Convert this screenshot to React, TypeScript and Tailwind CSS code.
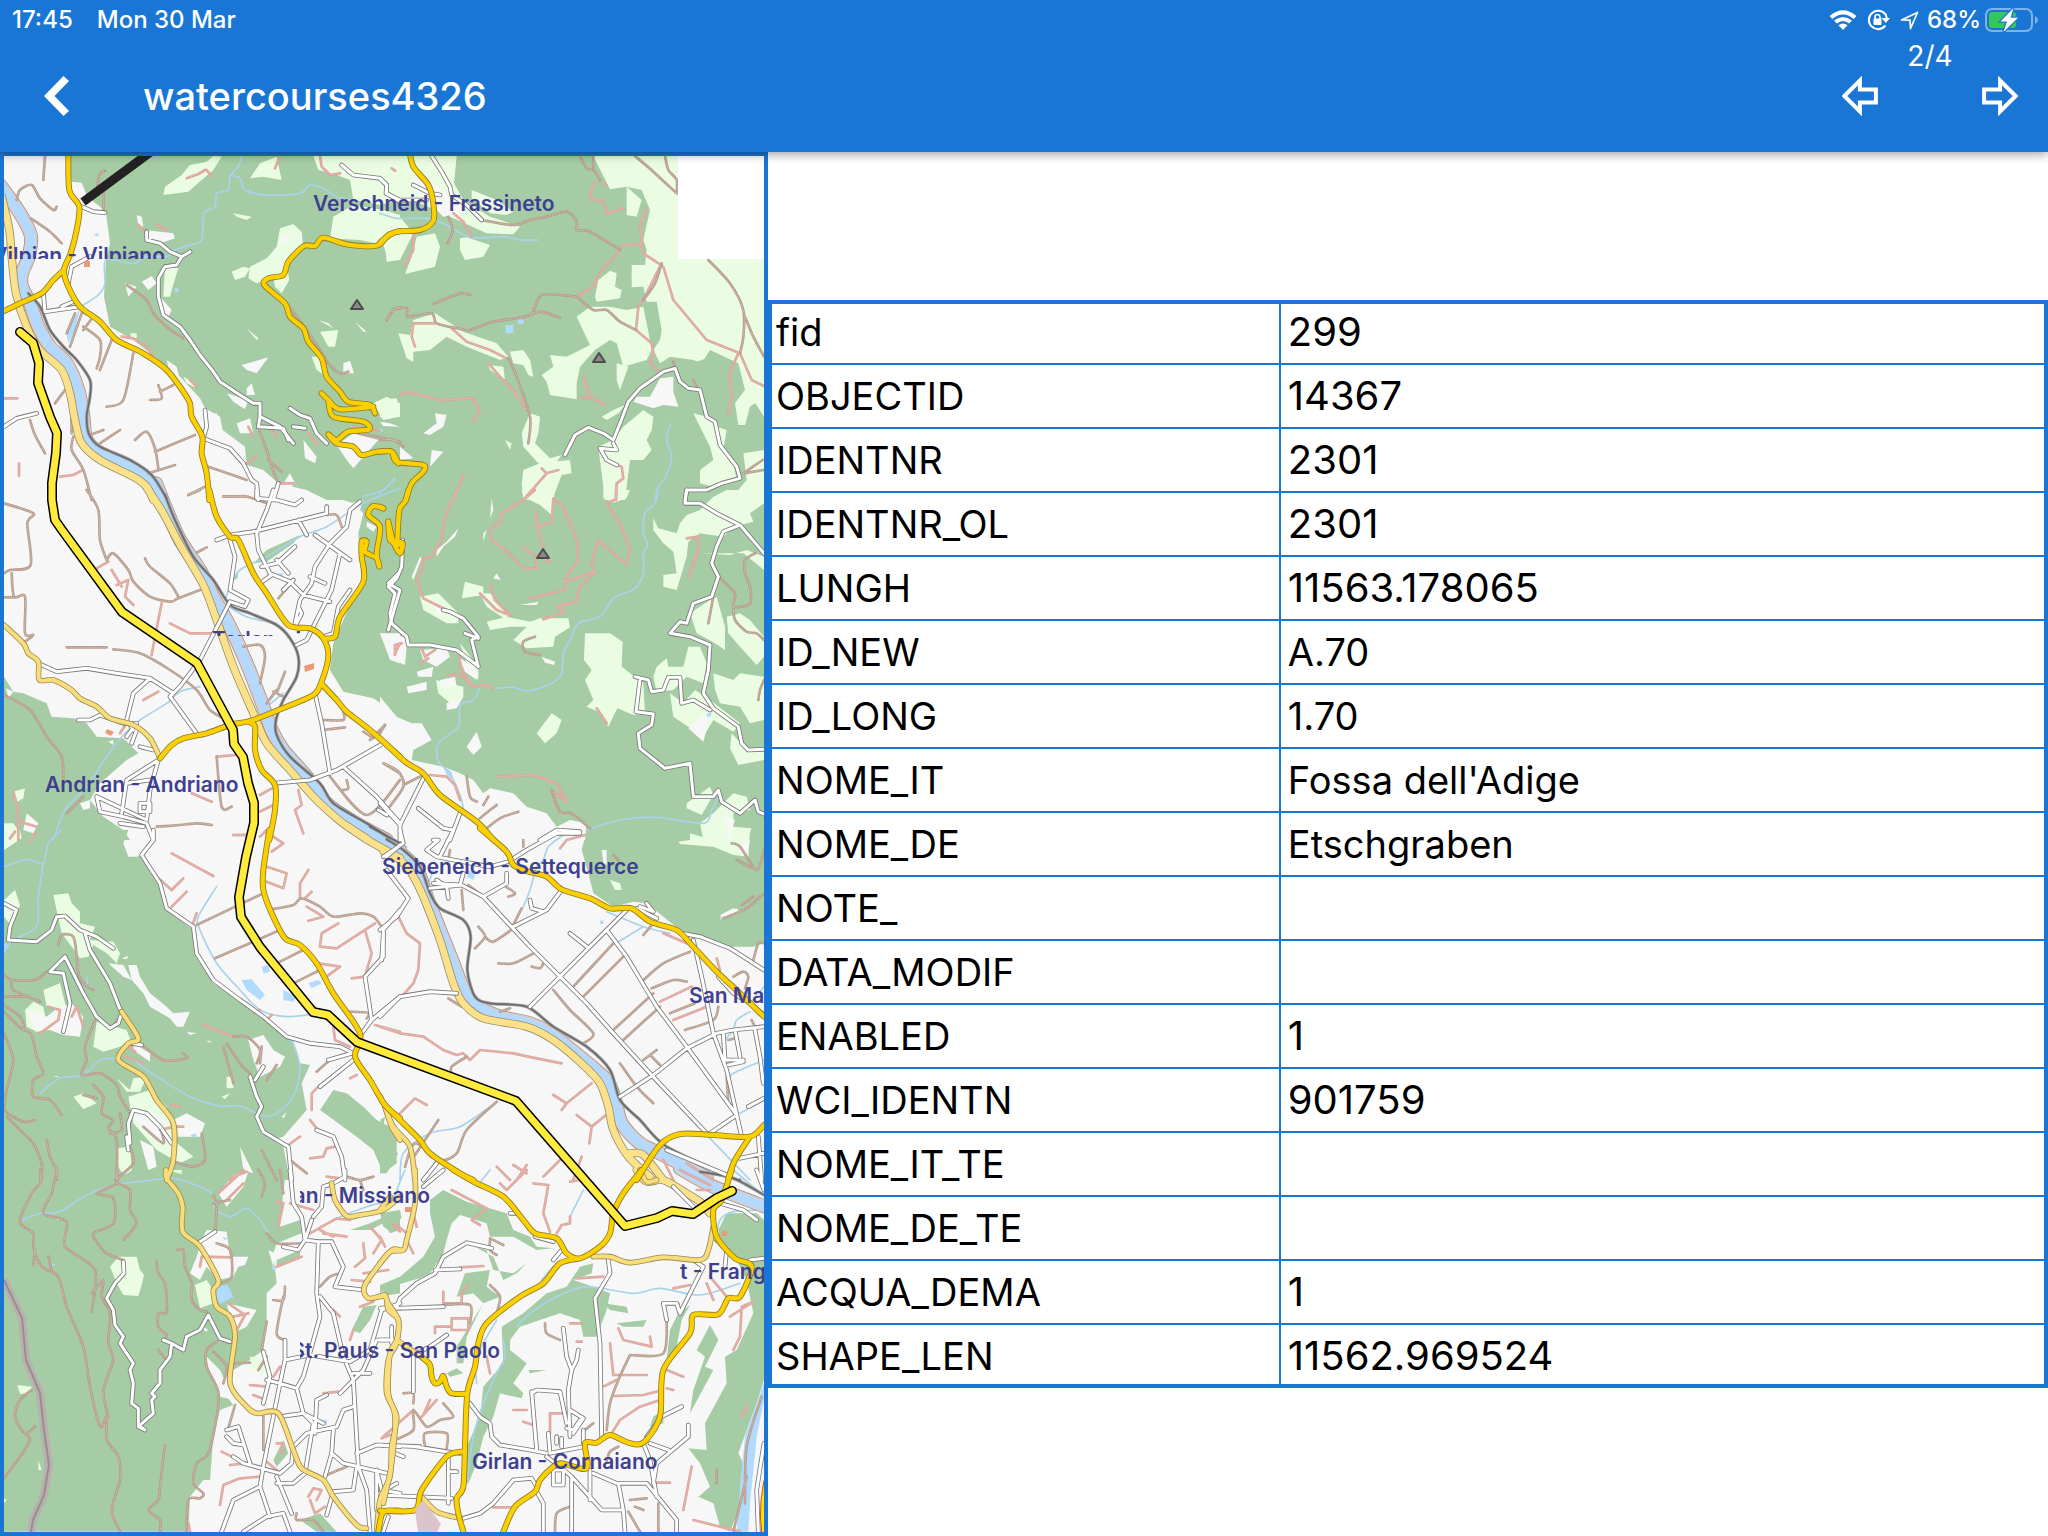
import React from "react";

type Tile = {
  x: number;
  y: number;
  forest?: string;
  meadow?: string;
  open?: string;
  wood?: string;
  water?: string;
  stream?: string;
  river?: string;
  motorway?: string;
  rail?: string;
  path?: string;
  track?: string;
  minor?: string;
  secondary?: string;
  primary?: string;
};

// Each tile has its own origin on the map; its geometry is stored at three units per map pixel.
const tiles: Tile[] = [
  {
    x: 0,
    y: 150,
    forest:
      "M200 0 208 60 215 95 245 98 262 140 300 170 318 190 330 280 318 330 312 440 330 530 400 570 465 620 540 680 600 745 615 775 660 800 668 840 735 890 740 945 790 960 835 1000 920 1020 980 1050H1200V0Z",
    meadow:
      "M570 45 620 35 640 18 665 20 640 60 605 90 565 125 490 135 495 110 545 75ZM780 40 830 20 845 90 790 80 750 85ZM940 18H1200V150L1140 165 1060 150 1050 90 1010 75 955 60ZM1000 200 1060 165 1150 180 1200 195V330L1165 330 1150 285 1080 270 990 265ZM840 235 880 222 905 245 910 290 880 305 860 340 868 390 845 430 825 410 820 385 770 400 745 385 750 350 800 325 830 290ZM695 365 730 350 750 355 735 380 705 390ZM495 350 535 355 515 420 510 440 490 440ZM700 190 755 200 740 210 710 200ZM960 545 1015 540 1005 590 985 590ZM935 620 965 620 980 680 950 660ZM1120 760 1160 740 1200 760V800L1150 810ZM390 550 410 550 410 565 395 565ZM610 820 640 830 640 850Z",
    open: "M410 195 425 200 430 230 415 225ZM435 240 520 250 525 265 480 280 440 270ZM845 255 865 255 865 278 845 275ZM725 645 805 622 770 670 740 660ZM740 715 755 700 765 735 740 735ZM680 730 745 750 735 778 700 755ZM425 395 455 378 470 400 445 420ZM375 400 410 410 385 440ZM480 440 515 480 500 510 485 490ZM500 630 530 650 540 690 505 650ZM550 680 585 700 585 712 560 700ZM1030 640 1050 632 1062 670 1030 670ZM710 820 750 805 760 850 720 850ZM910 870 950 920 945 940 915 925ZM1010 885 1060 850 1135 870 1100 910 1060 955 1040 930ZM740 535 775 565 770 570ZM955 510 985 520 1000 535ZM1065 515 1100 545 1090 545ZM680 930 710 900 740 950ZM870 970 885 1000 865 1020 850 1000ZM600 800 650 790 665 830 655 870 610 850Z",
    water: "M205 580 198 545 215 510 240 478 225 540ZM280 255 295 248 295 260ZM525 415H535V425H525Z",
    stream:
      "M725 18 715 50 690 80 685 120 650 130 645 170 612 190 605 270 570 285 525 300 500 320 440 320 400 340 318 330 315 400 295 435 250 465 M690 75 720 85 735 120 800 135 900 130 930 105 970 115 1010 140 1060 150 M1185 985 1150 1020 1090 1040",
    river: "M0 105 40 160 72 210 93 260 86 320 66 370 66 410 90 460 115 530 150 590 200 640 235 720 250 800 258 865 292 903 380 945 440 985 485 1050",
    motorway: "M5 140 28 240 36 330 48 430 80 530 120 600 185 660 210 730 225 810 245 880 300 930 400 980 440 1010 460 1050",
    rail: "M85 430 120 470 150 540 190 590 230 630 270 690 270 740 260 800 268 855 300 890 390 930 455 975 500 1045",
    path: "M12 745 52 745M57 940V978M180 980 220 975 245 962M365 560 400 565 440 590 460 620M415 225 440 250 M470 225 500 240M570 690 590 710M560 85 595 72 615 60 M620 60 635 80 M960 18 965 50 990 75 1020 70M840 18 825 55M745 830 760 860M810 835 830 860M925 850 955 885M740 940 770 920M840 1000 880 1000M1060 830 1135 842",
    track:
      "M135 18 130 90M50 150 60 120 95 105 120 145 160 180 170 170M92 205 150 245 185 280M290 130 298 75 315 62 M312 110 310 180M400 610 370 750 320 770M450 750 485 745 475 705M480 725 520 705M250 530 300 570 300 620 290 655M335 570 300 660M165 760 195 720M405 870 440 845 465 895 475 955M465 905 585 855M445 970 525 945M270 855 310 840M300 880 360 840M625 950 740 990M565 1035 615 1010M670 1040 735 1038M380 405 440 450 460 490 500 530 550 565M860 460 920 540 960 600 985 640 1020 670 1045 665M770 820 800 900 815 950 835 1000M805 930 845 965M220 860 215 900 250 960 275 1050M1160 510 1180 480 1200 475M1075 850 1130 860 1200 875M90 810 105 855 135 910M200 700 212 760 215 850M225 490 200 550M245 490 210 590M272 510 250 540",
    minor:
      "M245 170 280 185 315 188M440 245 440 270 480 280 510 305 545 320 570 305M545 320 530 345 495 350 475 385 475 440 490 495 540 530 570 570 600 615 640 665 660 695 720 735 760 760 780 760 780 800 840 830 880 880M870 775 900 795 930 805 950 850 980 880M880 830 915 835 M780 800 775 830 850 835 865 870M615 780 620 830 610 865 690 895 730 940 755 990 770 1000 775 1050M820 1050 835 1000M12 830 50 805 110 790M130 430 135 485 240 470M185 470 220 455M205 400 215 350 270 320 M1025 45 1060 75 1140 85 1160 105 1160 130 1200 155",
    primary:
      "M205 0 208 120 238 170 230 240 212 310 192 360 205 410 240 470 300 515 350 570 430 610 500 660 550 725 570 760 575 800 607 860 605 910 620 970 628 1050M192 360 160 390 125 430 60 460 12 483M1200 243 1165 255 1130 287 1040 283 970 263 945 288 912 288 865 335 850 375 805 385 793 405 855 460 870 500 910 535 925 575 965 625 980 680 1020 725 1045 755 1110 765 1125 790M1120 770 1020 778 985 750 965 730 M985 750 1000 800 1090 815 1108 838 1045 845 1010 870 985 853 1010 880 1060 890 1085 915 1130 905 1175 905 1195 940",
  },
  {
    x: 380,
    y: 150,
    forest: "M0 0H1152V1050H0Z",
    meadow:
      "M0 18H230L222 100 250 150 330 200 420 230 400 253 320 250 220 205 100 150 0 140ZM275 120 350 150 400 185 380 195 330 190 275 145ZM10 210 60 200 100 250 60 330 20 335 15 280 0 265ZM110 260 165 250 180 290 165 350 75 372 95 320ZM240 265 260 262 330 285 310 320 255 330 240 300ZM640 18H895V326H1152V740L1110 770 1095 825 1075 825 1065 760 1095 720 1075 640 990 600 965 640 940 630 870 620 840 640 820 600 840 570 845 540 830 455 800 455 790 410 755 412V345L795 345 800 300 790 270 810 180 785 120 740 110 690 118ZM590 500 630 470 690 470 740 480 790 470 805 545 815 600 800 630 730 650 710 580 690 570 645 600 600 650 590 700 590 748 510 735 500 695 485 675 520 650 510 615 560 620 630 585ZM645 440 655 390 690 362 710 370 705 410 725 420 720 445 650 455ZM55 550 90 555 100 510 165 490 250 545 350 580 385 620 360 630 260 590 200 560 150 600 100 605 100 635 80 625ZM390 605 430 600 450 630 460 680 445 675 430 645 400 640ZM325 645 370 650 375 690 330 660ZM740 110 785 150 770 200 740 195ZM710 640 745 650 720 720 710 690ZM665 800 700 780 735 765 715 790 680 810ZM790 780 820 800 815 840 800 870 815 900 790 930 750 930 735 1050H675L655 890 700 870 730 830ZM450 790 480 800 475 850 465 880 510 925 545 915 530 935 475 940 430 890 425 850ZM430 960 480 940 570 930 575 970 545 975 520 1040 430 1050 425 1000ZM940 790 980 800 1010 830 1040 840 1030 900 1060 940 1070 990 1000 1010 960 1000 960 960 1000 930 990 890ZM1090 910 1152 900V1050H1050L1100 990ZM0 750 50 745 60 790 10 808 0 800ZM375 870 395 880 390 900ZM1120 750 1152 742 V800Z",
    open: "M810 740 840 685 880 680 880 725 895 770 850 765 820 775 760 755 770 740ZM100 85 150 90 240 170 245 190 190 200 160 170 100 115ZM165 790 200 795 190 830 150 855 130 850 170 820ZM155 900 190 905 150 950ZM60 890 100 925 60 930ZM0 815 30 820 60 830 10 828Z",
    wood: "M940 640 970 628 1000 650 1000 690 970 715 940 680Z",
    water: "M377 525 400 525 400 550 377 550ZM412 505 432 510 430 522 415 522ZM0 835 10 840 5 848Z",
    stream:
      "M0 190 50 205 140 205 200 225 270 262 370 260 420 270 475 270M872 820 860 870 875 920 860 975 835 1010 825 1050M45 985 0 1030",
    path: "M640 95 630 145 670 155 680 190 730 175M660 95 680 105M800 175 780 230 790 310 850 350 880 450 980 570 1080 610 1115 690 1152 708M595 435 640 410 655 375 715 305 725 285 785 282M840 350 800 430 775 470 768 540 815 580 820 610 812 640 840 668M165 520 100 520 95 560 105 590M60 735 80 725 180 750 280 745 298 780 280 815M325 640 360 680 400 720 440 780M215 535 260 575 330 600 380 625M610 680 630 740 675 765M600 740 630 745M700 940 725 950 730 985 710 1000 708 1050M485 955 500 970 535 960M500 970 430 1050M250 975 220 1050M220 190 250 215 275 260M100 250 100 300 75 345M1075 610 1048 670 1055 740 1045 790M35 55 45 62",
    track:
      "M600 18 620 55 640 60 660 90M640 18V55M765 18 820 65 890 130M855 18 865 60 890 90V130M305 210 400 225 450 210 500 200 560 185 590 215 590 240 630 245 720 300M845 340 825 400 790 450M20 510 45 475 80 475 85 500 155 490 170 520 235 535 270 540 340 515 450 495 485 435 590 440M450 495 480 485 540 503M160 462 240 430 270 435M590 440 640 480 680 480 720 515 768 540M385 625 410 680 450 800 445 880M205 200 218 240 203 280M985 330 1050 400 1090 480 1090 560 1080 610M1095 500 1120 560 1152 620M0 870 40 870 70 890M880 635 885 655M940 690 950 710M1090 970 1152 960 M1090 970 1148 930",
    minor:
      "M0 85 20 105 18 130 60 150 140 150M155 18 185 65 210 110 215 135 260 165 305 210M100 105 150 130 180 135M555 915 585 855 625 832 670 850 700 870 720 820 745 755 780 715 850 665 885 655 900 695 925 715 960 720 980 800 1005 815 1020 885 1070 950 1080 985 1025 1000 980 1020 920 1020 915 1050M700 880 710 900 660 895 680 930 710 945",
    primary: "M88 0 100 50 145 105 160 160 160 213 120 240 50 245 15 265 0 278M0 905 35 905 50 935 130 945 130 965 95 1000 78 1050",
  },
  {
    x: 0,
    y: 490,
    forest:
      "M12 560 40 605 70 610 140 640 155 680 220 685 260 700 290 740 370 745 415 790 380 810 300 880 270 930 310 980 370 1020 390 1050H12ZM940 0 1060 40 1090 70 1075 130 1085 280 1060 320 1000 460 990 540 1030 605 1120 625 1200 680V0Z",
    meadow: "M40 905 75 895 70 925 45 940ZM12 1000 40 1000 60 1030 50 1050H12Z",
    open: "M1050 40 1090 30 1080 60 1060 70ZM1100 95 1130 110 1120 125 1100 110ZM1140 430 1200 430V520L1170 510ZM18 595 40 605 25 625ZM240 940 270 930 270 955 250 960ZM325 755 340 750 340 765ZM80 970 115 1000 100 1030 70 1020Z",
    wood: "M760 220 800 180 900 135 880 160 800 215ZM700 260 715 250 712 265 695 275Z",
    water: "M832 250 848 250 848 262 832 262Z",
    stream:
      "M1200 -5 1090 40 980 110 900 140 800 200 720 240 690 290 680 340 740 380 830 400M600 590 540 605 500 640 420 690 370 735 320 800 260 890 195 960 160 1050M850 610 800 650",
    river: "M468 -20 500 60 540 150 600 240 640 320 690 410 740 520 790 650 815 720 850 780 920 860 980 940 1060 995 1160 1050",
    motorway: "M435 -15 490 70 540 165 610 285 650 390 700 530 760 670 800 760 870 840 940 920 1010 985 1050 1015 1100 1045",
    rail: "M495 15 525 90 580 200 640 270 690 345 750 370 830 405 870 445 895 500 890 560 850 630 828 690 830 735 870 800 960 880 1000 940 1100 1000 1170 1045",
    path: "M290 235 325 215M335 240 365 290M350 285 385 270 375 320 400 345M455 495 465 440 485 340M510 400 570 430 640 430M430 630 475 605M650 800 710 795M780 915 825 890M780 965 820 945M575 910 635 935M700 1035 740 1035M780 1040 800 1020M895 900 905 945 885 960 910 1030M40 905 55 960 55 1050M60 995 110 1010M1185 490 1200 460M360 730 380 700",
    track:
      "M260 0 295 60 300 150 320 210M12 40 100 70 82 100 92 225 30 240 12 250M35 250 42 320H75V430L100 435 75 455M12 322H42M320 210 340 190 385 240 400 275 450 320 510 335 535 325 600 300M435 205 450 230 510 280 535 320M200 472H320M340 478 420 490 510 540 590 600 630 660 680 690M565 15 600 0M670 20 740 20 800 40M590 188 620 172M730 470 780 465 795 500 780 580M855 545 830 610M820 605 850 620M800 640 830 600M12 615 90 660 140 740 185 800 190 870M650 800 665 950H695M970 690H1030V665M970 720 1035 712M1110 750 1155 705M1090 725 1120 745M1150 820 1200 850M990 860 1100 975 1200 870M1040 870 1045 895 1030 900M470 1010 540 1005 590 1000 635 1005M200 970 250 920M835 325 865 290M980 75 1010 75 1025 110",
    minor:
      "M770 0V25L830 30 885 45 905 30M820 0 800 60 770 130 775 180 810 250 870 275 910 315 990 335M650 150 690 135 760 125 980 70V50M1080 35 1050 60 1040 110 990 160 945 230 935 280 900 330 885 400M895 90 920 135M945 135 1050 210M1020 190 995 300 940 410 920 450 890 465M930 260 975 280M785 230 830 220 885 170M830 210 865 250M690 150 705 200 690 300 745 330 735 350 690 335 600 510 540 590 510 620 590 730M880 270 850 300M780 280 815 255M895 350 905 370 890 400M115 520 170 545 260 535 350 550 450 565 520 610M450 565 400 610 380 690 400 720M235 690 270 690 300 675 370 700 410 700 380 740M410 720 395 760M945 610 965 700 990 850M930 870 1010 840 1150 760M820 880 930 870M1030 830 1130 920 1200 1000M475 810 380 870 365 970M475 810 450 900 440 990 290 920M290 920 300 965 370 980 440 1000 460 1050M420 940H450V965H420ZM360 1000 430 1010M1165 420 1200 300 1165 280 1195 250M1050 300 1015 350 1000 430 970 440M420 770 460 780M380 880 450 870",
    secondary: "M12 405 70 460 85 490 115 515 118 570 160 570 215 600 240 625 290 650 330 685 400 705 450 745 478 800",
    primary:
      "M628 0 650 80 690 140 715 150 760 250 800 310 865 405 930 415 970 445 985 500 963 580 940 615 860 650 760 690 690 705 620 730 550 745 515 765 480 805M963 580 1010 630 1040 665 1110 720 1200 800M970 445 1005 440 1020 380 1090 275 1085 200 1085 155 1100 155 1095 185 1130 205 1138 230 1130 190 1140 110 1105 75 1120 48 1150 55M745 695 765 710 765 780 785 840 825 885 825 960 808 1050M1165 95 1170 150 1200 165",
  },
  {
    x: 380,
    y: 490,
    forest: "M0 0H1152V1050H0Z",
    meadow:
      "M425 0H525L515 75 480 45 430 20ZM670 0H750L740 25 700 38 670 25ZM820 85 835 115 890 130 900 100 920 75 960 60 1000 20 1040 0H1152V40L1110 70 1120 95 1060 110 1030 140 960 130 925 155 920 200 890 300 850 290 850 255 890 250 880 185 850 160 820 120ZM245 325 255 275 310 290 310 315ZM120 320 175 310 235 370 235 400 200 400 130 360ZM320 395 380 380 450 395 480 385 565 385 570 412 525 440 520 470 440 475 400 450 440 410 390 410 330 420ZM615 430 690 430 728 455 725 530 790 580 795 670 760 675 712 655 685 710 655 665 620 650 640 630 615 570 635 540 612 510ZM515 670 545 690 530 730 495 760 470 730ZM168 570 250 590 250 620 210 640 175 610ZM300 310 330 310 385 370 380 390 320 350ZM965 190 1090 190 1152 240V200L1100 180 1050 195ZM930 370 990 330 1010 320 1035 410 1035 480 1005 460 950 430ZM1040 380 1080 370 1110 390 1152 440V500L1130 525 1080 470 1045 430ZM820 560 830 530 860 505 865 530 910 530 925 470 960 470 980 520 970 580 920 560 880 600 830 605ZM870 610 910 640 945 600 990 630 1080 700 1060 725 1000 690 970 740 880 680ZM1000 550 1060 570 1080 550 1152 560V690L1110 700 1080 650 1020 640 1005 600ZM1055 730 1100 780 1152 780V810L1075 825 1050 775ZM920 940 990 890 1000 915 965 975 920 955ZM960 1000 1000 970 1060 910 1100 920 1110 960 1060 970 1060 1010 1115 1015 1100 1050H970ZM240 460 295 530 295 570 260 520Z",
    open: "M0 430 75 440 80 470 75 525 40 510 20 470ZM120 480 200 475 210 500 170 530 130 510ZM110 545 160 530 155 560 115 560ZM80 590 140 575 140 600 85 610ZM180 570 225 560 230 590 185 590ZM200 640 250 620 230 655 200 660ZM0 620 50 680 95 700 125 700 155 750 100 780 95 810 190 830 240 850 280 870 310 910 330 895 400 910 440 950 500 970 530 1010 570 990 620 1000 615 1050H0ZM260 770 290 725 305 770 280 795ZM485 500 525 515 522 525 495 518ZM235 500 290 540 290 570 255 545ZM925 715 975 670 985 700 970 755ZM170 180 200 155 235 115 225 140 190 170 170 200ZM335 25 340 60 330 85ZM95 260 120 200 125 205 100 270ZM310 130 320 120 310 155ZM340 265 350 250 362 270ZM420 345 475 335 470 345ZM380 310 385 325ZM150 340 190 360 180 380ZM1030 980 1065 990 1050 1030Z",
    water: "M190 830 215 845 218 870 200 855ZM980 670 995 670 992 680 982 680ZM340 310 348 320 342 322Z",
    stream:
      "M835 0 825 40 795 70 790 130 803 165 790 190 790 250 765 295 700 325 660 380 595 400 570 450 550 490 545 550 515 580 445 603 400 592 345 595M300 590 280 630 240 645 235 710 175 760 175 815 210 850 245 930 250 970M1015 920 995 960 970 1000 830 982 720 990 620 1020",
    path: "M230 0 195 80 185 150 155 200 130 205 125 240 110 270 130 325 200 360M465 0 430 30 365 70 360 95 330 120 335 150 375 180 430 235 470 235 470 195 510 215M465 65 475 120 490 175M475 110 515 95 520 25 550 50 590 150 595 210 555 265 555 300 450 325M430 170 460 195M555 275 645 245 600 290 590 335 530 350 555 365 490 388M708 0V28L680 40 720 100 750 180 740 225 655 150 635 220 645 250M300 310 350 360 395 378M330 285 345 330 390 375M45 495V465L65 460M125 475 135 500 165 480M120 520 145 505M235 490 245 540 275 590 320 585 340 595M205 555 240 555 270 580M650 655 680 700M355 860 460 855 530 880 560 935 515 900 525 940M150 855 200 860 225 885 240 930M920 145 955 140 955 180 925 260",
    track:
      "M465 440 430 455 435 485 480 495M1125 190 1095 210 1095 250 1110 290 1110 340 1060 350 1065 310 1015 260M1060 350 1065 390 1100 425 1130 430 1152 450M1000 320 985 400M12 820 55 845 70 890 25 955M70 885 130 855M260 860 270 920 290 935M310 945 325 920M300 985 330 960 350 945M320 1015 360 985 415 965M515 900 540 965 575 970 630 1015M1152 570 1140 600 1135 630M0 730 15 705",
    minor:
      "M68 150 65 230 50 265 25 290 45 310 30 370 35 400 80 440 85 465 150 465 230 480 290 525 295 530 275 450 295 440 250 385 210 365 190 360M255 430 295 445M920 0 915 40 960 40 1010 70 1080 105 1152 190M1080 105 1030 125 1010 170 995 220 1015 260 995 320 940 340 920 400 900 395 870 430 930 440 990 465 985 540 970 610 1000 655 1075 710 1085 760 1105 780 1152 778M765 560 805 570 815 605 850 600 865 562 900 562 905 640 940 630 990 660M780 570 768 665 820 672 815 705 775 730 780 775 855 835 930 820 940 920 1000 920 1015 900 1025 935 1080 970 1125 930 1135 965 1152 972M0 940 60 1005V1050M130 865 60 1005M240 970 210 1050M115 955 190 1015 220 1020M480 1050 530 1020 600 1025M-5 960 20 975",
    primary:
      "M85 0 75 35 58 60 52 155M52 155 68 160 60 190 40 155 25 95M0 745 75 815 130 850 180 915 290 995 340 1050M0 50 10 55",
  },
  {
    x: 0,
    y: 830,
    forest:
      "M12 0H385L370 40 385 80 410 80 425 75 470 140 500 240 580 300 590 380 640 460 720 510 800 570 870 620 900 700 930 705 905 760 920 840 850 920 820 930 850 950 870 1050H12ZM960 840 1000 780 1040 790 1090 830 1130 870 1190 900 1190 1000 1150 1030 1120 960 1070 920Z",
    meadow:
      "M12 0H60L65 25 12 60ZM12 210 45 180 60 225 35 290 12 260ZM160 195 205 190 215 220 240 245 240 280 285 290 270 330 340 335 360 370 350 400 320 370 280 345 265 380 240 385 215 350 185 310ZM130 480 180 460 200 540 140 530ZM290 575 380 600 395 640 310 665 280 650ZM75 540 100 515 130 530 140 580 110 605 80 590ZM220 800 250 790 290 820 250 838ZM385 800 450 780 500 830 520 930 580 980 540 1000 470 960 400 880ZM350 745 390 780 400 745 440 740 420 785 380 785ZM350 955 390 950 395 1020 370 1035 355 1010ZM665 800 690 790 675 808ZM845 860 860 845 852 865ZM680 740 700 740 700 775 680 775Z",
    open: "M80 540 140 560 165 540 215 520 250 560 240 620 190 615 150 600 110 605ZM325 400 370 405 395 450 370 440ZM385 405 410 405 420 440 450 490 500 530 520 550 570 545 550 590 530 590 510 565 450 530 430 490 395 450ZM560 605 590 610 570 615ZM365 385 385 378 380 388ZM400 860 450 840 500 880 480 940 430 900ZM520 870 560 850 615 880 600 920 530 920ZM420 930 460 950 470 1010 445 1020ZM745 630 790 615 820 660 855 680 840 710 780 740 760 690ZM720 950 745 1000 760 1030 730 1020ZM400 640 450 670 450 695 400 660ZM600 620 610 622ZM620 630 635 635 628 638ZM160 738 175 738 172 742Z",
    water:
      "M725 450 755 448 795 495 780 510 740 480ZM785 410 805 405 810 425 790 430ZM925 460 955 450 965 460 935 475ZM850 480 890 500 880 515 850 510ZM12 340 30 345 12 370ZM570 915 590 910 585 925Z",
    stream:
      "M185 0 145 40 130 100 80 88 12 110M130 100 115 200 110 290 40 330 12 360M650 170 595 260 600 300 650 400 720 480 780 540 860 560 950 550M350 685 300 690 250 735 180 745 120 790M400 690 470 740 580 805 660 828 720 828 790 858 830 850 880 800 900 720 880 640 865 630M262 445V460",
    river: "M1085 -10 1200 62",
    motorway: "M1045 -10 1100 28 1200 84",
    path: "M515 70 640 138M470 140 515 180 550 145M510 235 560 185M575 290 590 250M700 15 755 15M820 20 850 40 815 65M800 110 860 130 850 175 800 155M925 120 900 160 900 205M915 205 935 185M920 230 970 260 925 272M1015 280 965 310 960 350 1010 355 1125 280M1095 300 1115 370 1095 440 1055 445M955 400 1020 410 980 440M1125 585 1200 605M145 530 180 540 175 570 120 610M215 560 230 530 250 590M375 680 430 700M610 585 700 620M515 825 540 830M520 890 550 890M525 890 480 900M865 945 900 920M930 985 970 980 980 955 1005 950M935 840 935 790 955 770M1050 745 1070 735M930 870 950 895M690 1050 730 1020M1000 590 1005 630 1050 650M780 540 760 550M815 555 805 565M90 35 105 10 M30 25 45 5M385 650 405 665",
    track:
      "M590 285 790 190M645 385 840 300M830 400 910 360M880 460 960 420M815 238 880 225 905 205 960 230 1000 260 1080 250 1120 260 1145 290M1045 545 1105 548 1100 565M12 435 35 450 105 450 140 425M35 450 40 480 120 515M12 500 80 500M12 525 60 560 70 600 12 545M70 600 95 615 110 680 130 730 100 750 100 800 150 810 185 855M12 610 40 690 20 780 15 840 70 875 105 870M20 860 70 910 100 940 125 1000 125 1050M140 930 150 980 170 1020V1050M285 570 255 650 260 690 245 735 300 730 350 765 360 800 390 850M280 765 310 800 305 850 340 870 325 895 350 930 350 1050M360 850 365 900 330 910M250 795 290 805M175 345 185 315 220 320 230 380 235 430 260 470 280 480M350 570 340 590M420 640 490 690 560 685 550 670M430 890 490 940 480 890M605 910 615 990 575 1010 525 995M700 620 740 620 780 660 770 700M785 650 780 700M830 705 800 750M670 650 695 740 700 760M680 640 720 700 750 730M785 960 830 1050M870 990 920 1030M950 725 990 690M390 950 400 1000 345 1050",
    minor:
      "M460 0 460 30 425 75 480 160 500 235 580 290 590 370 640 450 720 510 790 560 860 620 930 640 1020 650 1060 670M12 220 50 240 30 290 25 330 110 335 155 300 170 260 195 258 240 300 290 320 340 355M255 310 270 360 330 460 365 550 355 580 330 595 290 560 250 490 195 380 150 425 190 430 210 520 190 605M1200 240 1150 300V380L1095 440 1115 570 1085 610M1115 570 1200 500M985 690 1055 670M960 770 1010 730 1060 690M750 740 770 800 785 830 770 860 790 905 865 950 875 1050M790 710 765 750M950 900 1000 920 1025 980 1035 1050M390 940 385 880 400 840 440 850 480 890 515 940M385 960 380 920M395 640 425 645",
    secondary: "M365 545 415 625 385 640 355 690 430 740 470 810 520 880V990L500 1050M1155 830 1175 890 1200 930",
    primary:
      "M808 0 790 120 790 180 815 250 855 325 900 345 950 400 1000 490 1080 610 1065 680 1110 750 1155 825 1200 865",
    rail: "M1110 -10 1200 40",
  },
  {
    x: 380,
    y: 830,
    forest:
      "M620 0 605 60 625 130 640 190 700 230 760 215 800 220 850 260 900 300 980 330 1040 350 1120 350 1152 340V0ZM510 0H560L500 10ZM0 935 30 900 55 920 40 960 55 970 20 1030 0 1030ZM0 870 15 860 10 890Z",
    meadow:
      "M895 35 930 30 930 10 980 25 1010 5 1080 0 1110 0 1105 80 1060 75 1000 50 900 42ZM690 150 720 160 725 180 705 180ZM1030 250 1060 235 1090 245 1020 268Z",
    open: "M1040 0H1060L1050 30ZM1090 40 1110 30 1100 80 1080 60ZM665 60 680 60 680 105 670 100ZM1020 255 1070 235 1080 250 1030 268Z",
    water: "M60 40 85 50 75 60 60 55ZM265 120 285 130 280 150 262 140ZM660 272H670V282H660Z",
    stream:
      "M550 15 505 50 490 90 470 110 450 180 430 230M140 175 160 120M680 245 790 290 870 310M790 290 715 335M1110 545 1070 570 1060 600 1025 640M1152 690 1060 730 1040 760M1040 740 1065 860M1152 810 1080 850M60 1050 70 970 150 910 240 890 330 830M985 920 1110 1050M1152 470 1110 520",
    river: "M10 35 60 68 112 120 140 200 180 300 220 400 252 480 290 527 360 560 450 580 510 610 600 680 680 750 705 810 725 880 780 940 850 975 980 1042",
    motorway: "M10 63 60 90 92 125 130 200 180 330 220 460 250 520 310 565 440 590 520 630 610 705 660 760 685 830 700 900 745 980 810 1040M750 970 790 975 850 1050",
    rail: "M20 28 70 60 120 110 150 190 180 235 250 270 272 320 262 420 285 500 330 520 440 530 520 590 620 650 690 720 720 810 780 870 860 950 1050 1040 1080 1050",
    path: "M55 260 80 310 120 340 115 420 100 460 65 500M0 590 60 610 130 620 190 660 230 675 250 670 270 690 300 660 400 670 470 685 545 700M60 850 105 805 140 825M520 795 560 820 545 840M560 820 635 760M590 855 635 890 685 850M635 890 628 940M350 1010 390 1050M400 1005 440 1030 M410 1050 440 1005M490 1040 540 990M580 1050 605 980M850 310 920 340M840 515 935 470M880 570 980 530M1010 385 1020 420M850 990 880 1050M540 55 560 30 615 15M920 1000 1000 1050",
    track:
      "M265 165 310 200 M245 180 250 240M370 165 405 190 385 200M425 235 400 285M285 355 315 320 295 290M315 320 340 335 400 295M355 400 400 400 460 370M455 410 480 415 490 400M580 470 700 340M610 500 730 380M700 600 820 490M730 630 840 530M790 450 850 400 930 365M815 475 880 450 920 455M870 550 945 520M915 600 1000 570 1015 530M520 480 570 540 640 610 610 640M720 700 770 770 820 820M790 690 830 660M810 675 840 705M215 730 215 710 260 680M105 975 175 870M75 1010 105 940 180 990 230 970 260 900 350 815M205 505 245 530M360 545 390 535M790 315 820 280M1055 40 1080 50 1130 120 1152 60M1030 265 1100 235 1152 190M1085 225 1120 200M1120 390 1135 340 1152 340M1060 440 1090 425 1105 440 1095 475M1040 740 1045 820M1045 630 1065 625M700 75 715 90M205 90 210 60M430 30V50M1115 570 1125 590M1070 90 1130 120",
    minor:
      "M60 0 70 40 10 80M60 45 20 80M140 60 175 30 160 30M140 60 170 80 220 90 330 110 385 95 440 60 530 10 600 10M180 80 220 0M380 130 380 160 310 200 245 165 150 175 M170 150 200 170 205 205M250 130 240 165 160 160M20 120 85 205 50 260 0 300M10 310 5 390M310 200 450 350 540 440 620 520 700 610 810 730 980 910M570 310 620 350M450 530 540 440 680 300 740 240M400 290 500 240 545 180M450 210 455 235 490 245M680 300 740 380 830 530 920 650 1070 855 990 910M940 330 965 440 1000 610 1040 720 1085 920M720 800 820 735 920 655 1010 610 1060 600 1152 590M1065 600 1080 680M1035 690 1090 690M1045 705 1090 695M905 310 960 320 1050 355 1152 420M0 560 60 500 150 485 230 490M1125 600 1140 680 1150 760M1105 830 1152 805M1070 855 1085 920M130 1050 170 1000M860 960 1040 1035M780 230 820 245 800 220M1015 440 1060 490 1110 520 1152 555M1135 920 1145 1050M1080 985 1152 970M1030 610 1035 690M770 235 830 265",
    secondary: "M15 830 40 890 90 950 105 1050",
    primary:
      "M300 -5 380 65 400 105 445 125 500 140 545 178 630 205 690 235 755 235 810 275 890 300 935 345 1010 425 1080 490 1152 560M770 1050 840 945 900 912 1000 915 1110 920 1152 885M1110 920 1065 990 1045 1045M0 800 15 825 70 880 120 930 150 970 240 1030 280 1050",
  },
  {
    x: 0,
    y: 1170,
    forest:
      "M12 0H860L850 60 840 170 900 150 905 190 830 220 820 250 830 340 800 370 800 450 790 540 750 570 700 600 650 640 700 705 660 720 640 800 630 930 610 930 570 980 565 1085H12ZM1050 180 1110 160 1200 120V180L1170 190 1150 160 1110 180ZM1055 480 1090 410 1130 405 1110 450 1080 490ZM820 870 850 810 865 850 830 890ZM900 1050 960 1030 1010 1085 950 1085ZM830 270 900 240 900 260 830 290ZM1140 380 1160 350 1200 340V370Z",
    meadow:
      "M330 290 355 260 410 260 420 300 432 315 425 345 415 378 370 375 350 340ZM585 345 620 330 640 360 640 400 600 415ZM750 560 795 560 795 615 755 600ZM52 645 95 650 90 670 60 672ZM365 0H395L380 12ZM500 0H545V12ZM115 870 125 900 115 900ZM12 985 20 990 12 1000Z",
    open: "M620 180 680 185 690 260 745 260 735 285 715 290 700 320 655 330 620 290 600 330 570 310 590 260 605 210ZM680 400 770 420 740 470 700 490 690 440ZM655 70 700 15 745 5 730 50 680 110ZM620 560 660 600 700 690 660 680 625 600ZM805 240 825 250 820 290ZM185 65 205 75ZM170 142H180V150H170ZM610 470 625 480 615 485Z",
    water: "M652 348 682 345 700 380 660 402 650 380ZM815 285 830 295 820 302ZM665 200 685 205 675 210ZM970 750 980 748 980 765 972 765ZM145 275 168 285 150 290Z",
    stream:
      "M65 150 120 130 180 125 260 75 340 45 420 35 520 25 600 50 640 75 645 115 690 140 740 115 780 150 805 190M1020 140 1100 110 1170 90 1195 60",
    path: "M830 95 850 100 835 170M870 100 940 120M930 190 1010 145 1050 150M960 180 1000 200M1040 200 970 190M1110 170 1145 210 1120 250M1090 220 1095 265 1065 290M1055 330 1110 335M1090 310 1165 300M600 290 605 260 690 262M830 290 905 260M685 400 735 435 705 490M745 430 700 440M1020 440 1000 420M1050 510 1060 480M820 620 840 590M750 645 800 650M760 675 785 685M970 670 1015 665M660 1005 670 945 720 925 780 920M690 885 740 880M665 845 695 860M800 875 830 900M830 820H850L845 850M925 980 940 955 965 960 950 990M930 990 945 1030 975 1010M1145 805 1170 795M1080 410 1120 395M1180 165 1200 185M655 70 720 10M680 90 730 40M700 20 740 5M980 20 1020 25M565 1060 570 1085",
    track:
      "M120 0 120 40 95 70 60 155 100 190 100 230 125 290 175 320 200 410 250 530 270 650 300 770 320 740 320 810 355 860 360 930 335 1020 360 1085M170 0 155 70 130 130 200 155 195 230 285 300 275 425M275 370 310 330 305 380 330 430 325 520 340 570 310 660 325 740M350 0 350 40 290 70 340 85 340 160 280 190 290 215 320 250 370 270M350 40 390 60 390 120 410 160 370 210M100 285 105 240M470 275 475 310 495 340 500 425 475 430 475 470 500 495 490 515M530 240H550L555 290 575 340 575 390 600 420 620 425M640 75 650 110 645 185M640 100 690 90M775 0 795 40 785 80M840 0 850 70M800 190 830 220 900 220M855 350 850 390 820 390M850 380 830 490 855 510M800 455 785 540M1020 310 990 320 960 350M1040 20 1080 30 1120 20M1090 60 1080 30M650 515 620 540 620 590 655 665 650 740 625 850 590 880 580 940 610 970 600 985 565 990 560 1085M640 545 680 590 670 640M650 220 690 240 695 320 665 340M705 705 685 775M790 735V840M495 825 480 950 475 990 445 1020 480 1050V1085M95 660 60 690 45 740 75 790 105 770M75 790 90 810 60 860 12 925M145 260 155 300M1040 890 980 915M890 1030 890 1050 940 1050 970 1085M475 540 500 570M705 580 750 578M775 600 800 560",
    minor:
      "M370 275 372 310 345 340 320 385 340 420 345 465 370 500 360 520 400 580 390 600 400 640 395 700 415 715 415 765 435 780 415 770 460 730 455 690 465 680 455 670 480 640 480 600 510 560 515 520 490 510M515 520 550 540 560 500 600 480 625 435 660 505 690 515M645 185 600 215M870 0 880 100 905 140 915 210 955 215 995 215 1030 290 1005 350 1090 360M935 150 915 210 895 240 850 230M1035 0V20L1000 40 970 50 965 110 940 140M955 215 950 370 960 440 935 530 910 620 890 655 910 730 940 760 915 910 880 940 830 940M960 380 1000 430 1030 560 1060 630 1075 890 1100 960 1110 1085M790 545 810 620 790 700M855 510 855 570 840 640 820 740 790 890 780 950 810 1040M800 630 840 640 890 655M855 570 930 555 1050 575 1110 540 1145 420 1200 400M840 740 910 730M910 730 970 760M700 860 730 880 840 910 875 880 880 830 920 790 1010 770 1030 720 1060 710M945 790 950 690 980 675M780 950 700 990 665 1085M730 1085 800 1040 850 1030 870 1085M830 920 875 1030M680 780 715 770 750 880M680 800 700 820 730 825M1000 780 995 850 1030 880 1075 890 1160 910M1070 850 1130 825 1200 830M1070 890 1060 960 1000 965 980 1035M995 850 975 920M1020 670 1060 630 1090 600 1130 510 1165 510M1060 610 1110 610M1130 900 1145 960 1200 970M1150 1085 1165 1040M1130 900 1130 1020M1175 470V520",
    secondary:
      "M498 0 500 25 535 70 548 110 548 185 600 230 655 330 640 360 650 410 690 440 705 500 690 640 740 710 770 730 835 730 880 840 905 895 970 930 1000 980 1070 1065 1100 1075M995 40 1005 90 1040 138 1080 135 1150 120 1200 80M1200 240 1170 245 1095 345 1105 385 1155 378 1165 420 1195 450 1190 520 1165 570 1160 670 1190 740 1175 830 1170 920 1140 990 1130 1085",
    primary: "M1200 1022 1160 1022 1145 1035 1135 1085",
    rail: "",
  },
  {
    x: 380,
    y: 1170,
    forest:
      "M150 90 190 60 260 95 380 130 400 180 450 200 470 230 520 235 470 240 400 200 330 200 320 160 240 135 215 160 200 210 190 250 150 310 120 325 30 350 0 370 0 345 60 320 130 260 165 200 150 130ZM0 130 60 120 65 145 30 160 35 185 10 170ZM285 230 320 240 340 300 400 310 440 280 410 310 370 330 340 260ZM255 310 330 300 320 350 360 380 310 400 280 370 230 380ZM365 470 430 430 500 370 560 350 600 290 640 280 635 310 580 330 640 350 690 370 680 420 650 500 610 500 600 450 540 430 420 470 390 510 390 540 440 580 400 640 430 670 425 685 360 670 340 740 310 800 290 880 265 940 250 930 260 830 300 740 310 650 370 580ZM670 400 740 410 745 430 690 420ZM710 460 800 450 790 470 730 470ZM870 480 895 430 930 405 905 450 890 530 860 570ZM1015 180 1040 130 1130 130 1152 150V190L1152 630 1130 700 1075 850 1110 920 1080 1010 1050 1085 1020 1070 1000 1000 955 980 990 950 960 880 925 835 980 840 975 760 1040 640 1035 560 1070 540 1120 430 1100 330 1060 250 1020 220ZM990 465 1015 510 975 590 1000 600 930 730 940 660 975 560 950 540ZM445 600 500 600 450 610 460 630ZM200 610 230 595 250 610 210 620ZM230 530 310 400 260 500 250 580 230 580ZM820 740 850 720 850 760 810 770Z",
    water: "M1152 640V690L1130 800 1110 1000 1105 1085H1070L1080 950 1095 800 1130 700Z",
    stream:
      "M75 0 50 60M330 0 290 50M610 60 570 140M290 640 290 560 350 450 M520 290 485 330M1152 120 1060 125 1020 150 1010 200M1060 0 1130 60M370 510 375 560 350 610 310 700 280 800 260 940M410 470 450 430 530 380 620 350 760 370 840 355 960 375 1080 340",
    river: "M900 -5 1000 50 1170 115",
    motorway: "M770 0 800 35 850 30 920 70 960 95 990 130",
    rail: "M960 5 1060 25 1152 75",
    path: "M215 60 320 115 275 150 300 165M440 0 380 60 360 40M460 40 505 45 490 130 510 185M570 35 600 30M530 190 545 165 570 160 570 140M240 292 310 288M190 365V400H245V370L265 345M165 490V470H210M215 445H265V480H215ZM320 560 330 610M400 720 440 720M430 755 460 765M510 790V730H550M570 460H605M590 515H605M690 520 700 615 800 615M715 475 730 510 815 530 810 500M670 650 710 630M700 678 790 675 830 665M695 790 720 750 780 710 840 690M860 600 910 620M860 655 880 660M1060 540 1080 500 1085 410 1120 395 1050 440M935 890 910 1020M1085 740 1100 710M830 938H870M340 1012H395M940 1050 1080 1085M80 210 100 250M100 130 110 170M0 200 15 230M50 165 80 190M590 325 670 320M880 355 930 345M895 430V400M125 740 170 690M10 800 100 720M980 340 1000 390M990 320 1040 380M900 0 990 45M950 60 990 60M130 735 150 690",
    track:
      "M70 670H100V700M190 700 220 740 180 750 140 770 100 720 100 780 45 810M135 830V790H200V835M330 205 370 225M330 210V240L350 255M330 345 360 380 350 430M190 405H270V460M495 460 500 490 540 510M750 555 850 550 860 440M750 555 715 630 690 700 680 780M615 780 640 760M680 875 690 845 715 830M750 990 800 985M765 1010 790 1020M745 1025 780 1085M835 1000V1085M525 1085 530 1030 570 1010M1010 940 1010 900M1060 1085 1100 920M1145 680 1100 830 1095 1000",
    minor:
      "M190 0 130 50M0 415 50 410 60 385 110 340 165 310 190 260 260 218 335 235M165 300 240 297M50 415 190 410M390 130 410 130M465 200 520 215M520 270 545 240M685 270 690 310 645 385 660 520 665 800M550 475 560 560 575 600 565 660 570 800M595 540 590 570 575 600M455 665 470 840M455 670 470 660 540 665 560 760M105 830 200 845 240 850M0 825 120 830M270 700 300 740 330 760 335 800 360 825 450 840 500 850M505 790 510 850 610 830M570 720 610 745 580 790M610 780V830M500 860 540 890 575 920 620 970 665 1020 730 1020M470 965 490 1000V1085M400 930 455 925 470 950M400 930 340 1000 300 1030 250 1045M575 920V1085M630 900V990M640 910 710 940 800 940 890 1050V1085M715 940 730 1020 735 1085M820 940 830 880 925 800V765M790 820 810 870 830 980M810 820 865 840M800 800 845 740 905 710M850 400 890 400 900 430 970 290M850 400 860 450M940 270 970 290M1000 200 1040 240 1035 290M1110 270 1152 265M1020 100 1090 120 1130 150M880 50 940 110M205 850V1000M205 905H230M0 970 50 940M45 850 70 860M0 975 215 985M520 900H550V945H520ZM530 820V800M545 830V805M0 510H40M100 560V665M110 550 150 530 200 495M1152 820 1130 960 1135 1085M1130 0 1152 60M600 750 580 780 560 775",
    secondary:
      "M105 0 105 100 80 210 70 240 30 245 0 280M30 80 0 120M0 380 15 375 25 400 55 450 50 510 30 550 25 670 45 740 35 880 10 1000M50 510 130 565M640 260 690 260 750 278 850 262 960 270 985 240 1000 170M120 975 170 1025 240 1045M780 0 800 35 830 30",
    primary:
      "M220 0 280 35 370 80 430 150 465 190 530 205 560 250 600 265 660 230 690 190 700 130 730 70 785 0M600 265 540 280 490 340 420 380 320 460 295 520 285 590 262 670 255 830 250 950 230 985 235 1030 250 1085M130 565 150 585 155 620 165 640 180 635 190 618 200 650 215 670 262 672M245 845 200 860 125 960 105 1020 0 1022M370 1085 405 1010 465 965 480 930 520 890 545 880 620 895 615 820 650 818 690 795 745 818 790 818 840 740 850 600 930 490 940 435 1015 433 1045 385 1080 380 1115 290 1065 265 1010 200 1000 120 1025 90 1055 0",
  },
];

type LineLayer = {
  key: keyof Tile;
  smooth?: boolean;
  strokes: { color: string; width: number; dash?: string }[];
};

const lineLayers: LineLayer[] = [
  { key: "stream", smooth: true, strokes: [{ color: "#a8d3ea", width: 5 }] },
  {
    key: "river",
    smooth: true,
    strokes: [
      { color: "#8b8b8b", width: 42 },
      { color: "#e3c8c2", width: 38 },
      { color: "#b3d9ff", width: 29 },
    ],
  },
  {
    key: "path",
    strokes: [
      { color: "#dca59b", width: 8 },
      { color: "#eac9c2", width: 3, dash: "3 4" },
    ],
  },
  {
    key: "track",
    smooth: true,
    strokes: [
      { color: "#b69c8c", width: 8 },
      { color: "#dccfc6", width: 3, dash: "3 4" },
    ],
  },
  {
    key: "rail",
    smooth: true,
    strokes: [
      { color: "#a4a4a4", width: 10 },
      { color: "#6b6b6b", width: 5 },
    ],
  },
  {
    key: "motorway",
    smooth: true,
    strokes: [
      { color: "#9c8f6c", width: 25 },
      { color: "#fbe28a", width: 20 },
    ],
  },
  {
    key: "minor",
    strokes: [
      { color: "#777777", width: 14 },
      { color: "#ffffff", width: 9 },
    ],
  },
  {
    key: "secondary",
    smooth: true,
    strokes: [
      { color: "#9b8c50", width: 17 },
      { color: "#f9dd7a", width: 12 },
    ],
  },
  {
    key: "primary",
    smooth: true,
    strokes: [
      { color: "#8f7a22", width: 18 },
      { color: "#fbd000", width: 13 },
    ],
  },
];

const areaLayers: { key: keyof Tile; fill: string }[] = [
  { key: "forest", fill: "#a5cca5" },
  { key: "meadow", fill: "#eafde2" },
  { key: "wood", fill: "#a5cca5" },
  { key: "open", fill: "#f7f7f7" },
  { key: "water", fill: "#b0dafe" },
];

const tileTransform = (t: Tile) => `translate(${t.x} ${t.y}) scale(0.33333)`;

// Turns every open polyline of a path into a curve that passes through its points.
function smoothPath(d: string | undefined): string {
  if (!d) return "";
  const tokens = d.match(/[MLHV]|-?\d+/g) ?? [];
  const lines: [number, number][][] = [];
  let command = "M";
  let x = 0;
  let y = 0;
  for (let i = 0; i < tokens.length; ) {
    if (/[MLHV]/.test(tokens[i])) {
      command = tokens[i++];
      if (command === "M") lines.push([]);
      continue;
    }
    if (command === "H") x = Number(tokens[i++]);
    else if (command === "V") y = Number(tokens[i++]);
    else {
      x = Number(tokens[i++]);
      y = Number(tokens[i++]);
    }
    lines[lines.length - 1].push([x, y]);
  }
  return lines
    .map((p) => {
      let out = `M${p[0][0]} ${p[0][1]}`;
      for (let i = 0; i < p.length - 1; i++) {
        const a = p[i - 1] ?? p[i];
        const b = p[i];
        const c = p[i + 1];
        const e = p[i + 2] ?? c;
        out += `C${b[0] + (c[0] - a[0]) / 7} ${b[1] + (c[1] - a[1]) / 7} ${c[0] - (e[0] - b[0]) / 7} ${c[1] - (e[1] - b[1]) / 7} ${c[0]} ${c[1]}`;
      }
      return out;
    })
    .join("");
}

const watercourse =
  "M20 332 33 343 39 363 38 383 50 417 57 433 56 453 52 483 52 500 55 520 62 530 122 612 197 663 233 730 234 744 243 757 248 783 254 803 254 823 246 857 239 897 241 917 260 947 313 1012 328 1015 357 1042 516 1101 625 1226 657 1218 672 1211 693 1214 717 1198 732 1191";

const border = "M4 1280 22 1318 26 1360 40 1393 44 1430 49 1465 44 1495 33 1520 31 1532";

function MapView() {
  return (
    <svg
      className="absolute inset-0 h-full w-full"
      viewBox="4 156 760 1376"
      preserveAspectRatio="xMidYMid slice"
      role="img"
      aria-label="Map"
      fontFamily="Inter, 'Liberation Sans', sans-serif"
    >
      <defs>
        <clipPath id="north">
          <rect x="0" y="150" width="300" height="109" />
        </clipPath>
        <clipPath id="west">
          <rect x="0" y="540" width="300" height="96" />
        </clipPath>
        <clipPath id="south">
          <rect x="300" y="1150" width="378" height="386" />
        </clipPath>
      </defs>
      <rect x="0" y="150" width="768" height="1390" fill="#f7f7f7" />
      {areaLayers.map((layer) =>
        tiles.map((t) => (
          <path key={`${layer.key}-${t.x}-${t.y}`} transform={tileTransform(t)} d={t[layer.key] as string} fill={layer.fill} />
        )),
      )}
      <path d={border} fill="none" stroke="#b9b0b0" strokeWidth="8" />
      <path d={border} fill="none" stroke="#998e8e" strokeWidth="2" />
      {lineLayers.map((layer) =>
        layer.strokes.map((s) =>
          tiles.map((t) => {
            const d = t[layer.key] as string | undefined;
            return (
              <path
                key={`${layer.key}-${s.color}-${t.x}-${t.y}`}
                transform={tileTransform(t)}
                d={layer.smooth ? smoothPath(d) : d}
                fill="none"
                stroke={s.color}
                strokeWidth={s.width}
                strokeDasharray={s.dash}
                strokeLinejoin="round"
                strokeLinecap={s.dash ? "butt" : "round"}
              />
            );
          }),
        ),
      )}
      <path d="M415 1510 423 1500 441 1524 437 1532H418Z" fill="#dcc3cc" />
      <path
        d="M84 261h6v6h-6zM304 666l10-3v6l-9 3zM107 729l7 3-3 4-6-3zM405 1207h6v5h-6zM722 1231h5v5h-5z"
        fill="#eb9a78"
      />
      <path d="M768 1466Q757 1500 762 1536H768Z" fill="#ffe500" stroke="#e8401c" strokeWidth="1" />
      <rect x="678" y="150" width="90" height="109" fill="#ffffff" />
      <path d="M83 202 152 151" stroke="#222222" strokeWidth="9" fill="none" />
      <g fill="#8b8b8b" stroke="#4c4c4c" strokeWidth="2" strokeLinejoin="round">
        <path d="M351 309 357 300 363 309Z" />
        <path d="M593 362 599 353 605 362Z" />
        <path d="M537 558 543 549 549 558Z" />
      </g>
      <g fill="#3f3f8f" fontSize="21" fontWeight="600" className="select-none">
        <text x="313" y="211">Verschneid - Frassineto</text>
        <g clipPath="url(#north)">
          <text x="165" y="263" textAnchor="end">Vilpian - Vilpiano</text>
        </g>
        <g clipPath="url(#west)">
          <text x="212" y="647">Terlan - Terlano</text>
        </g>
        <text x="45" y="792">Andrian - Andriano</text>
        <text x="382" y="874">Siebeneich - Settequerce</text>
        <text x="689" y="1003">San Ma</text>
        <g clipPath="url(#south)">
          <text x="430" y="1203" textAnchor="end">Missian - Missiano</text>
          <text x="500" y="1358" textAnchor="end">St. Pauls - San Paolo</text>
        </g>
        <text x="680" y="1279">t - Frang</text>
        <text x="472" y="1469">Girlan - Cornaiano</text>
      </g>
      <g fill="none" strokeLinecap="round" strokeLinejoin="round">
        <path d={watercourse} stroke="#000000" strokeWidth="10" />
        <path d={watercourse} stroke="#ffeb3b" strokeWidth="7" />
      </g>
    </svg>
  );
}

function StatusBar() {
  return (
    <div className="flex h-10 items-center justify-between pr-2.5 pl-3 text-2xl leading-10 font-medium">
      <div className="flex gap-6">
        <span>17:45</span>
        <span>Mon 30 Mar</span>
      </div>
      <div className="flex items-center">
        <svg className="mr-2.5 h-5 w-7" viewBox="0 0 28 20" aria-label="Wi-Fi" role="img">
          <path d="M0.5 6Q14-5.500 27.500 6L24.600 9Q14 0.200 3.400 9Z" fill="#fff" />
          <path d="M5 10.600Q14 3.300 23 10.600L20.100 13.600Q14 8.600 7.900 13.600Z" fill="#fff" />
          <path d="M9.500 15.200Q14 11.700 18.500 15.200L14 20Z" fill="#fff" />
        </svg>
        <svg className="mr-2.5 h-6 w-[23px]" viewBox="0 0 23 24" aria-label="Rotation lock" role="img">
          <path d="M18.500 6.500A9.200 9.200 0 1 0 18 18" fill="none" stroke="#fff" strokeWidth="2" strokeLinecap="round" />
          <path d="M18.500 6Q20 9 19.500 12" fill="none" stroke="#fff" strokeWidth="2" />
          <path d="M14.500 10H23L18.800 15Z" fill="#fff" />
          <rect x="6.500" y="10.500" width="8" height="6.500" rx="1" fill="#fff" />
          <path d="M8 11V9a2.500 2.500 0 0 1 5 0v2" fill="none" stroke="#fff" strokeWidth="1.600" />
        </svg>
        <svg className="mr-2 h-[19px] w-[19px]" viewBox="0 0 19 19" aria-label="Location" role="img">
          <path d="M1.500 9 17.500 1.500 10.500 17.500 10 9.200Z" fill="none" stroke="#fff" strokeWidth="1.700" strokeLinejoin="round" />
        </svg>
        <span>68%</span>
        <svg className="ml-1 h-6 w-[53px]" viewBox="0 0 53 24" aria-label="Battery charging" role="img">
          <rect x="1" y="1" width="46" height="22" rx="6" fill="none" stroke="#fff" strokeOpacity="0.450" strokeWidth="2" />
          <path d="M50 8Q53 9.500 53 12T50 16Z" fill="#fff" fillOpacity="0.450" />
          <rect x="4" y="4" width="27" height="16" rx="3" fill="#34c759" />
          <path d="M28.500 0 15.500 13.500H22L18.500 24 33 9.800H25.500Z" fill="#fff" stroke="#1976d5" strokeWidth="2.500" paintOrder="stroke" />
        </svg>
      </div>
    </div>
  );
}

const outlineArrow = "M2.400 20 17.900 4.500V13.500H33.900V26.500H17.900V35.500Z";

function Header() {
  return (
    <header className="relative z-10 bg-[#1976d5] text-white shadow-[0_2px_10px_rgba(0,0,0,0.4)]">
      <StatusBar />
      <div className="flex h-28 items-center pr-[30px] pl-11">
        <button type="button" aria-label="Back" className="flex h-12 w-[26px] items-center">
          <svg className="h-10 w-[26px]" viewBox="0 0 26 40" aria-hidden="true">
            <path d="M0 20 19.500 0 25 5 10.500 20 25 35 19.500 40Z" fill="#fff" />
          </svg>
        </button>
        <h1 className="ml-[73px] flex-1 text-[38px] leading-[48px] font-medium">watercourses4326</h1>
        <button type="button" aria-label="Previous feature" className="flex h-12 w-9 items-center">
          <svg className="h-10 w-9" viewBox="0 0 36 40" aria-hidden="true">
            <path d={outlineArrow} fill="none" stroke="#fff" strokeWidth="4" />
          </svg>
        </button>
        <span className="w-[104px] self-start text-center text-[28px] leading-8">2/4</span>
        <button type="button" aria-label="Next feature" className="flex h-12 w-9 items-center">
          <svg className="h-10 w-9 -scale-x-100" viewBox="0 0 36 40" aria-hidden="true">
            <path d={outlineArrow} fill="none" stroke="#fff" strokeWidth="4" />
          </svg>
        </button>
      </div>
    </header>
  );
}

const attributes: [string, string | number][] = [
  ["fid", 299],
  ["OBJECTID", 14367],
  ["IDENTNR", 2301],
  ["IDENTNR_OL", 2301],
  ["LUNGH", 11563.178065],
  ["ID_NEW", "A.70"],
  ["ID_LONG", "1.70"],
  ["NOME_IT", "Fossa dell'Adige"],
  ["NOME_DE", "Etschgraben"],
  ["NOTE_", ""],
  ["DATA_MODIF", ""],
  ["ENABLED", 1],
  ["WCI_IDENTN", 901759],
  ["NOME_IT_TE", ""],
  ["NOME_DE_TE", ""],
  ["ACQUA_DEMA", 1],
  ["SHAPE_LEN", 11562.969524],
];

function AttributeTable() {
  return (
    <table className="w-full table-fixed border-separate border-spacing-0 border-4 border-[#1976d5] text-[38px] leading-[48px] text-black">
      <tbody>
        {attributes.map(([name, value]) => (
          <tr key={name} className="group">
            <th
              scope="row"
              className="w-2/5 border-r-2 border-b-2 border-[#1976d5] py-[7px] pr-0 pl-1 text-left font-normal group-first:pt-1 group-last:border-b-0 group-last:pb-1"
            >
              {name}
            </th>
            <td className="h-16 border-b-2 border-[#1976d5] py-[7px] pr-0 pl-[7px] group-first:h-[61px] group-first:pt-1 group-last:h-[59px] group-last:border-b-0 group-last:pb-1">
              {typeof value === "number" ? <span className="text-[40px] leading-[48px]">{value}</span> : value}
            </td>
          </tr>
        ))}
      </tbody>
    </table>
  );
}

export default function App() {
  return (
    <div className="flex min-h-screen flex-col bg-white font-['Inter','Liberation_Sans',sans-serif]">
      <Header />
      <main className="grid flex-1 grid-cols-[3fr_5fr]">
        <section className="relative overflow-hidden border-4 border-[#1976d5]">
          <MapView />
        </section>
        <section className="flex items-center">
          <AttributeTable />
        </section>
      </main>
    </div>
  );
}
